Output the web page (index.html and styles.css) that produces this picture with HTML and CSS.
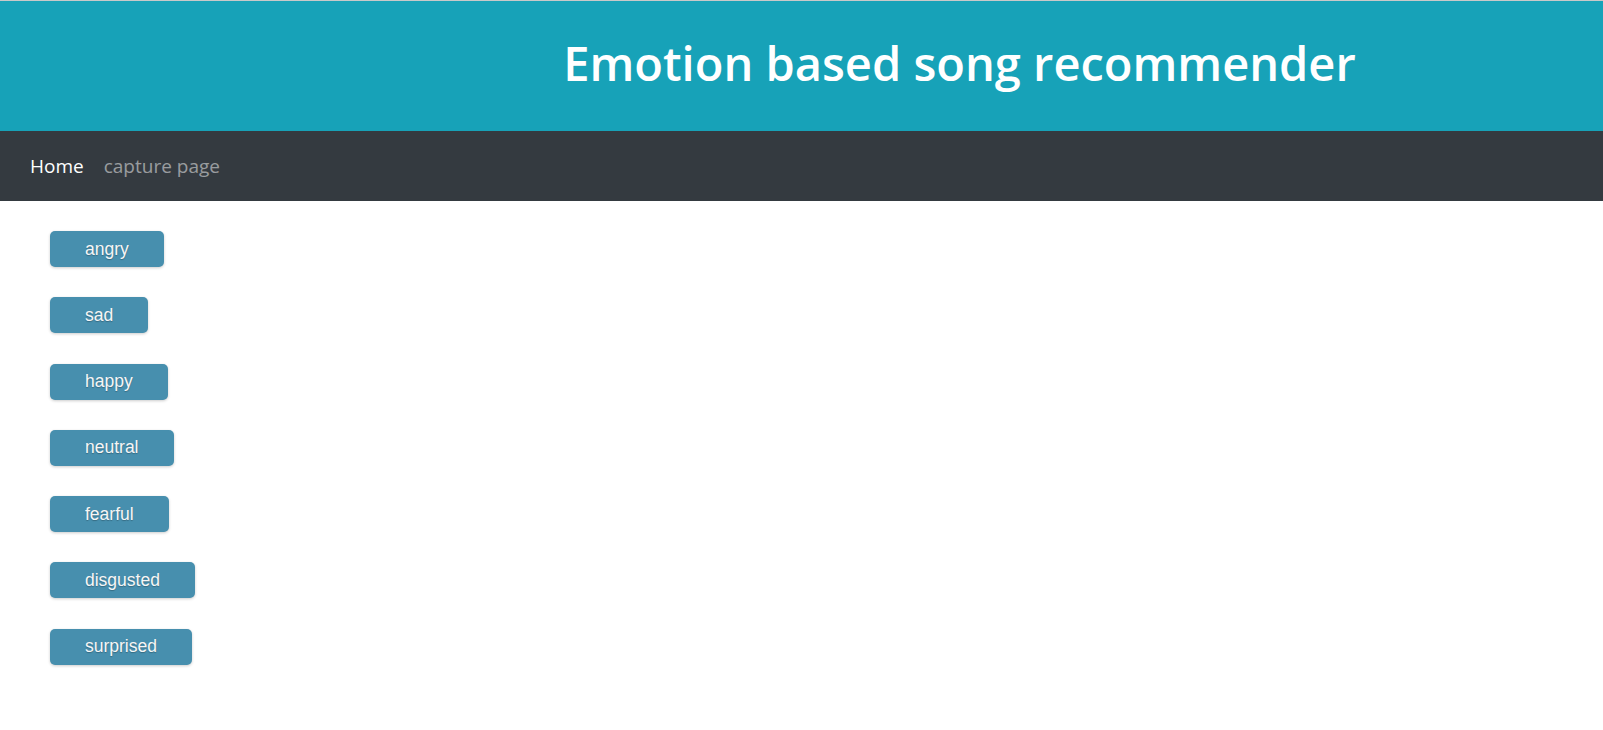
FILE: index.html
```html
<!DOCTYPE html>
<html lang="en">
<head>
<meta charset="utf-8">
<title>Emotion based song recommender</title>
<link rel="stylesheet" href="styles.css">
</head>
<body>
<header class="banner">
  <h1 class="banner-title">Emotion based song recommender</h1>
</header>
<nav class="navbar">
  <a class="nav-link active" href="#">Home</a>
  <a class="nav-link" href="#">capture page</a>
</nav>
<main class="emotions">
  <button class="emotion-btn">angry</button>
  <button class="emotion-btn">sad</button>
  <button class="emotion-btn">happy</button>
  <button class="emotion-btn">neutral</button>
  <button class="emotion-btn">fearful</button>
  <button class="emotion-btn">disgusted</button>
  <button class="emotion-btn">surprised</button>
</main>
</body>
</html>
```

FILE: styles.css
```css
html, body {
  margin: 0;
  padding: 0;
  background: #ffffff;
}

body {
  border-top: 1px solid #c9c9c9;
  font-family: "Open Sans", "Noto Sans", sans-serif;
}

.banner {
  background: #17a2b8;
  height: 130px;
  box-sizing: border-box;
  display: flex;
  align-items: center;
  justify-content: center;
  padding-left: 316px;
  padding-bottom: 6px;
}

.banner-title {
  margin: 0;
  color: #ffffff;
  font-family: "Open Sans", sans-serif;
  font-weight: 600;
  font-size: 47px;
  line-height: 1.2;
}

.navbar {
  background: #343a40;
  height: 70px;
  display: flex;
  align-items: center;
  gap: 20px;
  padding-left: 30px;
}

.nav-link {
  font-family: "Open Sans", sans-serif;
  font-size: 19px;
  color: rgba(255, 255, 255, 0.5);
  text-decoration: none;
}

.nav-link.active {
  color: #ffffff;
}

.emotions {
  display: flex;
  flex-direction: column;
  align-items: flex-start;
  gap: 30.3px;
  padding: 30px 50px;
}

.emotion-btn {
  height: 36px;
  padding: 0 35px;
  border: none;
  border-radius: 5px;
  background: #478fae;
  color: #f6f6f6;
  font-family: "Liberation Sans", Arial, sans-serif;
  font-size: 17.5px;
  text-shadow: 0 1px 1px rgba(0, 0, 0, 0.25);
  box-shadow: 0 1px 3px rgba(0, 0, 0, 0.2);
  cursor: pointer;
}
```
